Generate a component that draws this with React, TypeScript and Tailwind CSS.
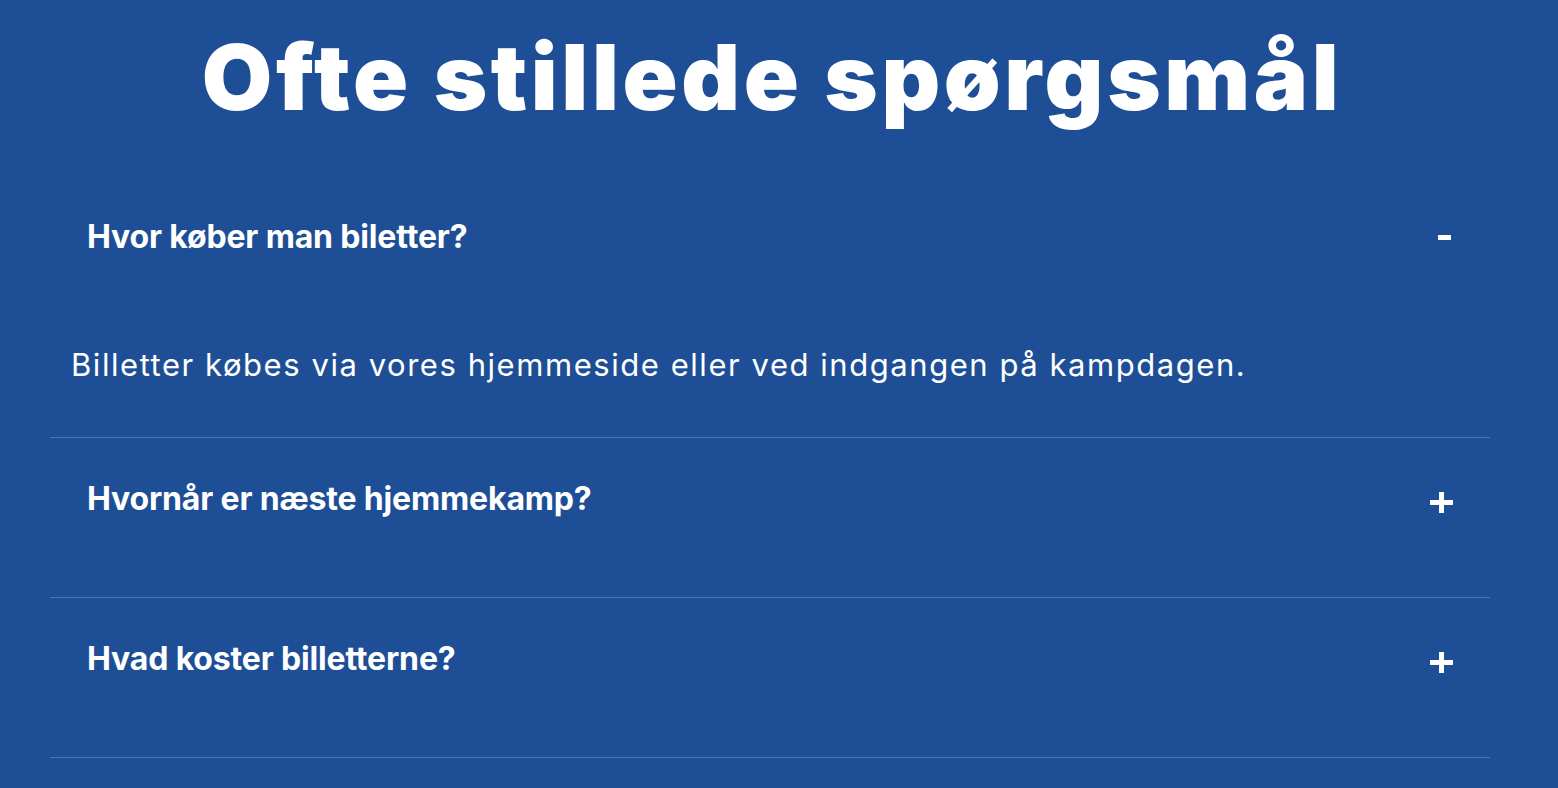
import React, { useState } from 'react';

interface FaqItem {
  question: string;
  answer: string;
}

const faqs: FaqItem[] = [
  {
    question: 'Hvor køber man biletter?',
    answer: 'Billetter købes via vores hjemmeside eller ved indgangen på kampdagen.',
  },
  {
    question: 'Hvornår er næste hjemmekamp?',
    answer: 'Se kampprogrammet for datoer og tidspunkter for de kommende hjemmekampe.',
  },
  {
    question: 'Hvad koster billetterne?',
    answer: 'Priserne afhænger af kampen og pladsen. Se billetsiden for aktuelle priser.',
  },
];

// chunky plus / minus toggle drawn from two bars
const ToggleIcon: React.FC<{ open: boolean }> = ({ open }) =>
  open ? (
    <span className="ml-auto mr-[2px] block h-[5px] w-[13px] bg-white" />
  ) : (
    <span className="relative mt-[6px] block h-[21px] w-[23px]">
      <span className="absolute left-0 top-[8px] h-[5px] w-[23px] bg-white" />
      <span className="absolute left-[9px] top-0 h-[21px] w-[5px] bg-white" />
    </span>
  );

const App: React.FC = () => {
  const [open, setOpen] = useState<number | null>(0);

  return (
    <div className="min-h-screen w-full bg-[#1e4f96] text-white font-['Inter',sans-serif]">
      <div className="w-[1540px]">
        <h1 className="pt-[22px] pl-[4px] text-center text-[91px] leading-[110px] font-black tracking-[0.04em]">
          Ofte stillede spørgsmål
        </h1>

        <div className="mx-[50px] mt-[44px]">
          {faqs.map((faq, i) => {
            const isOpen = open === i;
            return (
              <div key={i} className="border-b border-white/20">
                <button
                  onClick={() => setOpen(isOpen ? null : i)}
                  className="flex h-[159px] w-full items-start justify-between pl-[37px] pr-[37px] pt-[40px] text-left"
                >
                  <span className="text-[32px] leading-[42px] font-bold tracking-[-0.005em]">{faq.question}</span>
                  <span className="flex h-[42px] w-[23px] items-center">
                    <ToggleIcon open={isOpen} />
                  </span>
                </button>
                {isOpen && (
                  <p className="mt-[11px] pb-[53px] pl-[21px] text-[31px] leading-[38px] font-normal tracking-[0.05em]">
                    {faq.answer}
                  </p>
                )}
              </div>
            );
          })}
        </div>
      </div>
    </div>
  );
};

export default App;
